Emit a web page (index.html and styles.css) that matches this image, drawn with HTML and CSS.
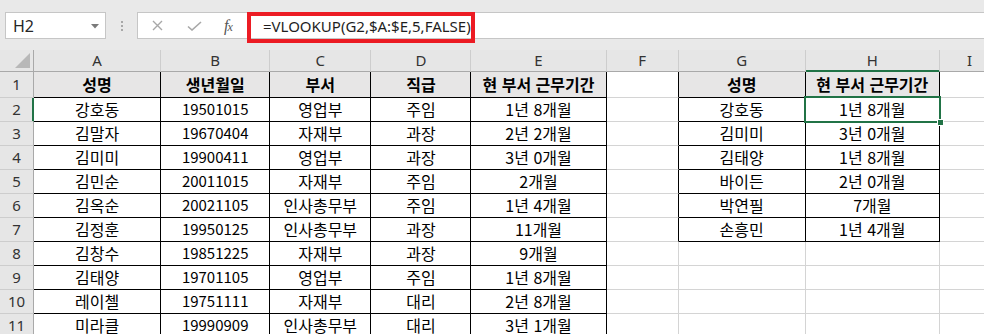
FILE: index.html
```html
<!DOCTYPE html>
<html lang="ko">
<head>
    <meta charset="UTF-8">
    <title>VLOOKUP - 현 부서 근무기간</title>
    <link rel="stylesheet" href="styles.css">
</head>
<body>
    <div class="ribbon">
        <div class="namebox">
            <span>H2</span>
            <svg class="caret" width="8" height="5" viewBox="0 0 8 5"><path d="M0 0H8L4 4.5Z" fill="#7a7a7a"/></svg>
        </div>
        <div class="grip"><i></i><i></i><i></i></div>
        <div class="fbar">
            <div class="ficons">
                <svg width="11" height="11" viewBox="0 0 11 11"><path d="M1 1L10 10M10 1L1 10" stroke="#a8a8a8" stroke-width="1.4" fill="none"/></svg>
                <svg width="15" height="10" viewBox="0 0 15 10"><path d="M1 5.5L5 9L14 1" stroke="#a8a8a8" stroke-width="1.6" fill="none"/></svg>
                <span class="fx">f<sub>x</sub></span>
            </div>
            <div class="formula">=VLOOKUP(G2,$A:$E,5,FALSE)</div>
        </div>
        <div class="callout"></div>
    </div>

    <table class="sheet">
        <colgroup>
            <col style="width:34px"><col style="width:127px"><col style="width:109px"><col style="width:101px">
            <col style="width:100px"><col style="width:135px"><col style="width:72px"><col style="width:127px">
            <col style="width:134px"><col style="width:60px">
        </colgroup>
        <tr class="cols">
            <td class="corner"><svg width="15" height="15" viewBox="0 0 15 15"><path d="M15 0V15H0Z" fill="#b8b8b8"/></svg></td>
            <td class="ch">A</td><td class="ch">B</td><td class="ch">C</td><td class="ch">D</td><td class="ch">E</td>
            <td class="ch">F</td><td class="ch">G</td><td class="ch on">H</td><td class="ch">I</td>
        </tr>
        <tr class="first">
            <td class="rh">1</td>
            <td class="d dh">성명</td><td class="d dh">생년월일</td><td class="d dh">부서</td><td class="d dh">직급</td><td class="d dh">현 부서 근무기간</td>
            <td class="lb"></td><td class="d dh">성명</td><td class="d dh">현 부서 근무기간</td><td></td>
        </tr>
        <tr>
            <td class="rh on">2</td>
            <td class="d">강호동</td><td class="d n">19501015</td><td class="d">영업부</td><td class="d">주임</td><td class="d">1년 8개월</td>
            <td class="lb"></td><td class="d">강호동</td><td class="d sel">1년 8개월</td><td></td>
        </tr>
        <tr>
            <td class="rh">3</td>
            <td class="d">김말자</td><td class="d n">19670404</td><td class="d">자재부</td><td class="d">과장</td><td class="d">2년 2개월</td>
            <td class="lb"></td><td class="d">김미미</td><td class="d">3년 0개월</td><td></td>
        </tr>
        <tr>
            <td class="rh">4</td>
            <td class="d">김미미</td><td class="d n">19900411</td><td class="d">영업부</td><td class="d">과장</td><td class="d">3년 0개월</td>
            <td class="lb"></td><td class="d">김태양</td><td class="d">1년 8개월</td><td></td>
        </tr>
        <tr>
            <td class="rh">5</td>
            <td class="d">김민순</td><td class="d n">20011015</td><td class="d">자재부</td><td class="d">주임</td><td class="d">2개월</td>
            <td class="lb"></td><td class="d">바이든</td><td class="d">2년 0개월</td><td></td>
        </tr>
        <tr>
            <td class="rh">6</td>
            <td class="d">김옥순</td><td class="d n">20021105</td><td class="d">인사총무부</td><td class="d">주임</td><td class="d">1년 4개월</td>
            <td class="lb"></td><td class="d">박연필</td><td class="d">7개월</td><td></td>
        </tr>
        <tr>
            <td class="rh">7</td>
            <td class="d">김정훈</td><td class="d n">19950125</td><td class="d">인사총무부</td><td class="d">과장</td><td class="d">11개월</td>
            <td class="lb"></td><td class="d">손흥민</td><td class="d">1년 4개월</td><td></td>
        </tr>
        <tr>
            <td class="rh">8</td>
            <td class="d">김창수</td><td class="d n">19851225</td><td class="d">자재부</td><td class="d">과장</td><td class="d">9개월</td>
            <td></td><td></td><td></td><td></td>
        </tr>
        <tr>
            <td class="rh">9</td>
            <td class="d">김태양</td><td class="d n">19701105</td><td class="d">영업부</td><td class="d">주임</td><td class="d">1년 8개월</td>
            <td></td><td></td><td></td><td></td>
        </tr>
        <tr>
            <td class="rh">10</td>
            <td class="d">레이첼</td><td class="d n">19751111</td><td class="d">자재부</td><td class="d">대리</td><td class="d">2년 8개월</td>
            <td></td><td></td><td></td><td></td>
        </tr>
        <tr>
            <td class="rh">11</td>
            <td class="d">미라클</td><td class="d n">19990909</td><td class="d">인사총무부</td><td class="d">대리</td><td class="d">3년 1개월</td>
            <td></td><td></td><td></td><td></td>
        </tr>
    </table>
</body>
</html>
```

FILE: styles.css
```css
body { margin: 0; overflow: hidden; background-color: #fff; font-family: "Noto Sans CJK KR", "Noto Sans", sans-serif; }

.ribbon { position: relative; height: 50px; background-color: #e9e9e9; display: flex; align-items: flex-start; padding: 12px 0 0 5px; box-sizing: border-box; }
.namebox { width: 101px; height: 27px; box-sizing: border-box; background-color: #fff; border: 1px solid #c6c6c6; display: flex; align-items: center; justify-content: space-between; padding: 0 6px 0 7px; font-family: "Noto Sans", sans-serif; font-size: 16px; color: #262626; }
.caret { margin-top: 1px; }
.grip { width: 31px; height: 27px; display: flex; flex-direction: column; align-items: center; justify-content: center; gap: 2px; }
.grip i { width: 2px; height: 2px; background-color: #a8a8a8; }
.fbar { flex: 1; height: 27px; box-sizing: border-box; background-color: #fff; border: 1px solid #c6c6c6; border-right: none; display: flex; align-items: center; }
.ficons { width: 110px; padding-left: 14px; display: flex; align-items: center; gap: 24px; box-sizing: border-box; }
.fx { font-family: "Liberation Serif", serif; font-style: italic; font-size: 16px; color: #555; margin-left: -2px; }
.fx sub { font-size: 12px; vertical-align: 0; margin-left: -1px; }
.formula { padding-left: 15px; font-family: "Noto Sans", sans-serif; font-size: 15px; color: #1e1e1e; }
.callout { position: absolute; left: 247px; top: 12px; width: 228px; height: 31px; box-sizing: border-box; border: 4px solid #ec1c24; }

.sheet { border-collapse: separate; border-spacing: 0; table-layout: fixed; width: 1000px; font-size: 16px; }
.sheet td { padding: 0 0 2px; height: 21px; line-height: 20px; text-align: center; white-space: nowrap; overflow: hidden; border-right: 1px solid #d4d4d4; border-bottom: 1px solid #d4d4d4; color: #000; }
.sheet td.n { font-size: 15px; }
.sheet tr.cols td { height: 20px; padding: 0 0 1px; background-color: #e6e6e6; border-right-color: #cdcdcd; border-bottom-color: #a9a9a9; color: #333; font-family: "Noto Sans", sans-serif; font-size: 15px; }
.sheet tr.first td { height: 23px; }
.sheet tr.cols td.corner { text-align: right; vertical-align: bottom; padding: 0 3px 3px 0; height: 18px; border-right-color: #a9a9a9; }
.corner svg { display: block; margin-left: auto; }
.sheet td.rh { background-color: #e6e6e6; border-right-color: #a9a9a9; border-bottom-color: #cdcdcd; color: #333; font-family: "Noto Sans", sans-serif; font-size: 15px; }
.sheet td.ch.on { border-bottom-color: #217346; box-shadow: inset 0 -1px #217346; }
.sheet td.rh.on { border-right-color: #217346; box-shadow: inset -1px 0 #217346; }
.sheet td.d { border-right-color: #000; border-bottom-color: #000; }
.sheet td.dh { background-color: #e7e6e6; font-weight: bold; }
.sheet td.lb { border-right-color: #000; }
.sheet td.sel { position: relative; overflow: visible; }
.sel::after { content: ""; position: absolute; inset: -2px; border: 2px solid #217346; }
.sel::before { content: ""; position: absolute; right: -5px; bottom: -5px; width: 5px; height: 5px; background-color: #217346; border: 1px solid #fff; z-index: 1; }
```
